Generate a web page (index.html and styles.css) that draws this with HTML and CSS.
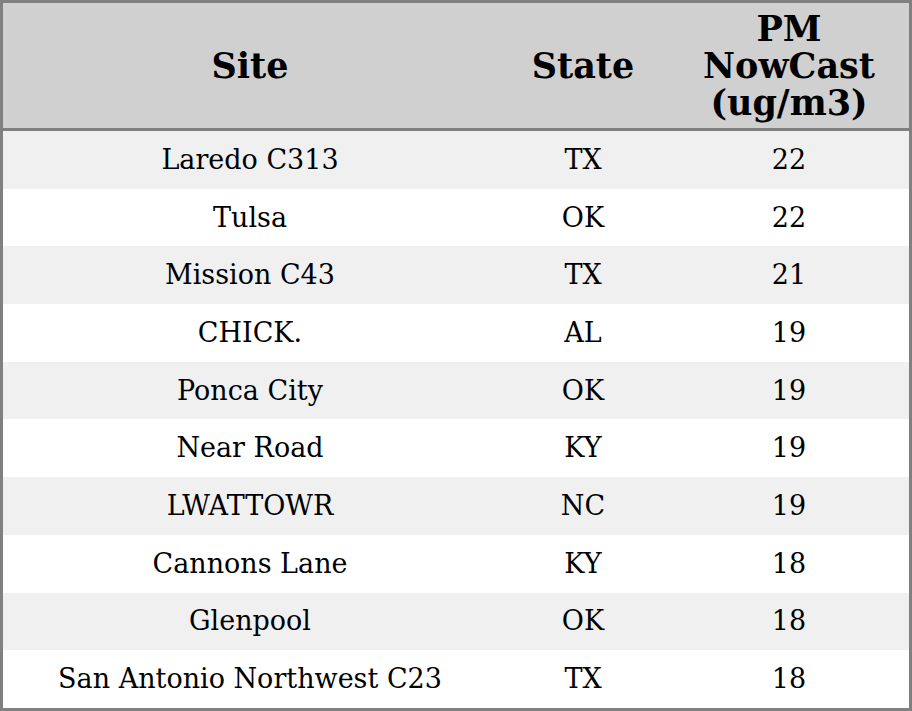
FILE: index.html
```html
<!DOCTYPE html>
<html>
<head>
<meta charset="utf-8">
<link rel="stylesheet" href="styles.css">
</head>
<body>
<table class="data">
  <colgroup>
    <col class="c-site">
    <col class="c-state">
    <col class="c-pm">
  </colgroup>
  <thead>
    <tr><th>Site</th><th>State</th><th>PM<br>NowCast<br>(ug/m3)</th></tr>
  </thead>
  <tbody>
    <tr><td>Laredo C313</td><td>TX</td><td>22</td></tr>
    <tr><td>Tulsa</td><td>OK</td><td>22</td></tr>
    <tr><td>Mission C43</td><td>TX</td><td>21</td></tr>
    <tr><td>CHICK.</td><td>AL</td><td>19</td></tr>
    <tr><td>Ponca City</td><td>OK</td><td>19</td></tr>
    <tr><td>Near Road</td><td>KY</td><td>19</td></tr>
    <tr><td>LWATTOWR</td><td>NC</td><td>19</td></tr>
    <tr><td>Cannons Lane</td><td>KY</td><td>18</td></tr>
    <tr><td>Glenpool</td><td>OK</td><td>18</td></tr>
    <tr><td>San Antonio Northwest C23</td><td>TX</td><td>18</td></tr>
  </tbody>
</table>
</body>
</html>
```
FILE: styles.css
```css
html, body {
  margin: 0;
  padding: 0;
  background: #ffffff;
}
.data {
  width: 912px;
  table-layout: fixed;
  border-collapse: separate;
  border-spacing: 0;
  border: 3px solid #808080;
  font-family: "DejaVu Serif", serif;
  color: #000;
}
.c-site { width: 494px; }
.c-state { width: 172px; }
.c-pm { width: 240px; }
.data th {
  background: #d0d0d0;
  font-size: 35px;
  font-weight: bold;
  line-height: 37px;
  height: 125px;
  padding: 0;
  border-bottom: 3px solid #808080;
  text-align: center;
  vertical-align: middle;
}
.data td {
  font-size: 27px;
  line-height: 30px;
  height: 57.7px;
  padding: 0;
  text-align: center;
  vertical-align: middle;
}
.data tbody tr:nth-child(odd) td {
  background: #f0f0f0;
}
.data tbody tr:nth-child(even) td {
  background: #ffffff;
}
```
